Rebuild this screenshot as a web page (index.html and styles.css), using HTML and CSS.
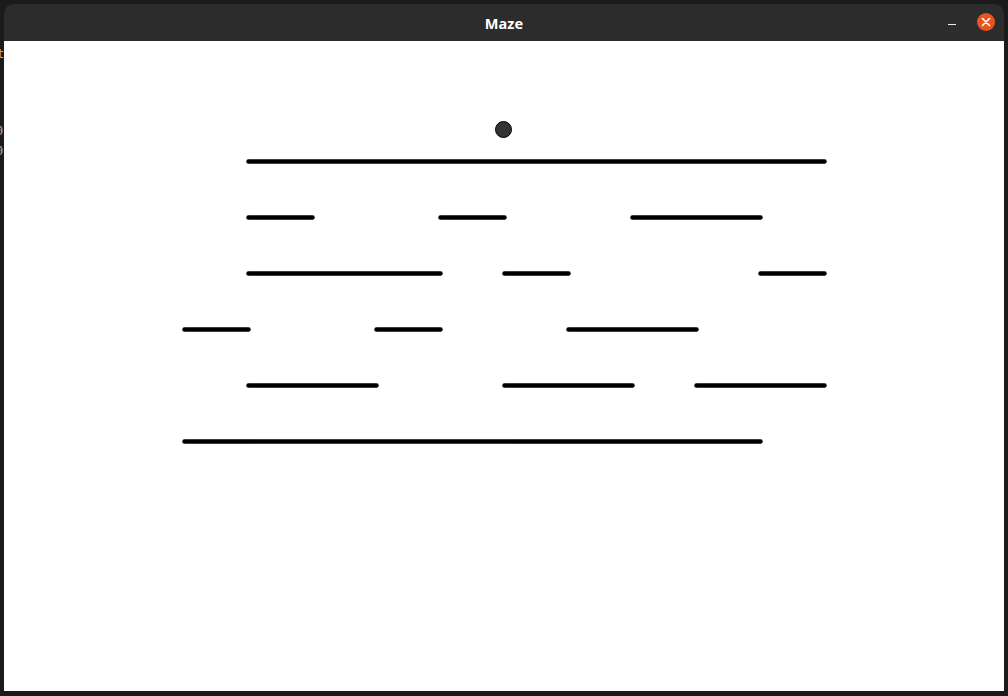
FILE: index.html
```html
<!DOCTYPE html>
<html>
<head>
<meta charset="utf-8">
<title>Maze</title>
<link rel="stylesheet" href="styles.css">
</head>
<body>
<div class="bg-peek">
  <span class="peek peek-t">t</span>
  <span class="peek peek-0a">0</span>
  <span class="peek peek-0b">0</span>
</div>
<div class="window">
  <div class="titlebar">
    <div class="title">Maze</div>
    <div class="controls">
      <span class="min"></span>
      <span class="close">
        <svg width="18" height="18" viewBox="0 0 18 18"><path d="M5.5 5.5 L12.5 12.5 M12.5 5.5 L5.5 12.5" stroke="#fff" stroke-width="1.6" stroke-linecap="round"/></svg>
      </span>
    </div>
  </div>
  <div class="content">
    <svg class="maze" width="1000" height="650" viewBox="0 0 1000 650">
      <g stroke="#000" stroke-width="4.5" stroke-linecap="round">
        <line x1="244.5" y1="120.5" x2="820.5" y2="120.5"/>
        <line x1="244.5" y1="176.5" x2="308.5" y2="176.5"/>
        <line x1="436.5" y1="176.5" x2="500.5" y2="176.5"/>
        <line x1="628.5" y1="176.5" x2="756.5" y2="176.5"/>
        <line x1="244.5" y1="232.5" x2="436.5" y2="232.5"/>
        <line x1="500.5" y1="232.5" x2="564.5" y2="232.5"/>
        <line x1="756.5" y1="232.5" x2="820.5" y2="232.5"/>
        <line x1="180.5" y1="288.5" x2="244.5" y2="288.5"/>
        <line x1="372.5" y1="288.5" x2="436.5" y2="288.5"/>
        <line x1="564.5" y1="288.5" x2="692.5" y2="288.5"/>
        <line x1="244.5" y1="344.5" x2="372.5" y2="344.5"/>
        <line x1="500.5" y1="344.5" x2="628.5" y2="344.5"/>
        <line x1="692.5" y1="344.5" x2="820.5" y2="344.5"/>
        <line x1="180.5" y1="400.5" x2="756.5" y2="400.5"/>
      </g>
      <circle cx="499.5" cy="88.5" r="8" fill="#333" stroke="#000" stroke-width="1"/>
    </svg>
  </div>
</div>
</body>
</html>
```

FILE: styles.css
```css
html, body {
  margin: 0;
  padding: 0;
  width: 1008px;
  height: 696px;
  overflow: hidden;
  background: #1b1b1b;
}
body {
  position: relative;
  padding: 4px 4px 5px 4px;
  box-sizing: border-box;
  display: flex;
  font-family: "Noto Sans", "Open Sans", sans-serif;
}
.bg-peek {
  position: absolute;
  left: 0;
  top: 0;
}
.peek {
  position: absolute;
  font-family: "DejaVu Sans Mono", monospace;
  font-size: 12px;
  line-height: 14px;
}
.peek-t { left: -3px; top: 47px; color: #d9a550; }
.peek-0a { left: -4px; top: 124px; color: #9fb4dc; }
.peek-0b { left: -4px; top: 144px; color: #9fb4dc; }
.window {
  position: relative;
  width: 1000px;
  height: 687px;
  display: flex;
  flex-direction: column;
  border-radius: 10px 10px 0 0;
  overflow: hidden;
}
.titlebar {
  height: 37px;
  flex: none;
  background: #2c2c2c;
  display: flex;
  align-items: center;
  justify-content: center;
  position: relative;
}
.title {
  color: #ffffff;
  font-weight: 700;
  font-size: 14.5px;
  letter-spacing: 0.1px;
}
.controls {
  position: absolute;
  right: 9px;
  top: 0;
  height: 37px;
  display: flex;
  align-items: center;
  gap: 21px;
}
.min {
  width: 8px;
  height: 1.5px;
  background: #eeeeee;
  margin-top: 4px;
}
.close {
  width: 18px;
  height: 18px;
  border-radius: 50%;
  background: #e95420;
  display: flex;
  align-items: center;
  justify-content: center;
  margin-top: -1px;
}
.close svg { display: block; }
.content {
  flex: 1;
  background: #ffffff;
}
.maze { display: block; }
```
